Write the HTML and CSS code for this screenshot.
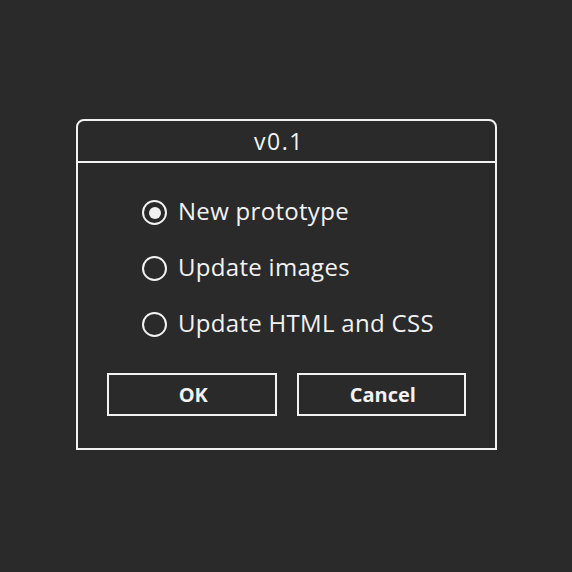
FILE: index.html
```html
<!DOCTYPE html>
<html lang="en">
<head>
<meta charset="utf-8">
<title>v0.1</title>
<link rel="stylesheet" href="styles.css">
</head>
<body>
<div class="dialog">
  <div class="dialog-title">v0.1</div>
  <div class="dialog-body">
    <ul class="options">
      <li class="option"><span class="radio checked"></span><span class="label">New prototype</span></li>
      <li class="option"><span class="radio"></span><span class="label">Update images</span></li>
      <li class="option"><span class="radio"></span><span class="label">Update HTML and CSS</span></li>
    </ul>
    <div class="buttons">
      <button class="btn">OK</button>
      <button class="btn">Cancel</button>
    </div>
  </div>
</div>
</body>
</html>
```
FILE: styles.css
```css
* { box-sizing: border-box; }
html, body { margin: 0; padding: 0; }
body {
  background: #2a2a2a;
  width: 572px;
  height: 572px;
  padding-top: 119px;
  font-family: "Open Sans", "Noto Sans", sans-serif;
  color: #f2f2f2;
}
.dialog {
  width: 421px;
  height: 331px;
  margin: 0 0 0 76px;
  border: 2px solid #f2f2f2;
  border-radius: 8px 8px 0 0;
  display: flex;
  flex-direction: column;
}
.dialog-title {
  height: 42px;
  line-height: 40px;
  text-align: center;
  font-size: 23px;
  letter-spacing: 1.5px;
  padding: 0 15px 0 0;
  border-bottom: 2px solid #f2f2f2;
}
.dialog-body {
  flex: 1;
  padding: 37px 29px 0 29px;
}
.options {
  list-style: none;
  margin: 0;
  padding: 0 0 0 35px;
  display: flex;
  flex-direction: column;
  gap: 31px;
}
.option {
  display: flex;
  align-items: center;
  height: 25px;
  gap: 11px;
}
.radio {
  width: 25px;
  height: 25px;
  border: 2px solid #f2f2f2;
  border-radius: 50%;
  flex: none;
  display: flex;
  align-items: center;
  justify-content: center;
}
.radio.checked::after {
  content: "";
  width: 12px;
  height: 12px;
  border-radius: 50%;
  background: #f2f2f2;
}
.label {
  font-size: 24px;
  letter-spacing: 0.3px;
  line-height: 25px;
  margin-top: -5px;
}
.buttons {
  display: flex;
  gap: 20px;
  margin-top: 36px;
}
.btn {
  flex: 1;
  height: 43px;
  background: transparent;
  border: 2px solid #f2f2f2;
  color: #f2f2f2;
  font-family: inherit;
  font-weight: 700;
  font-size: 20px;
  padding: 0 0 0 3px;
}
```
